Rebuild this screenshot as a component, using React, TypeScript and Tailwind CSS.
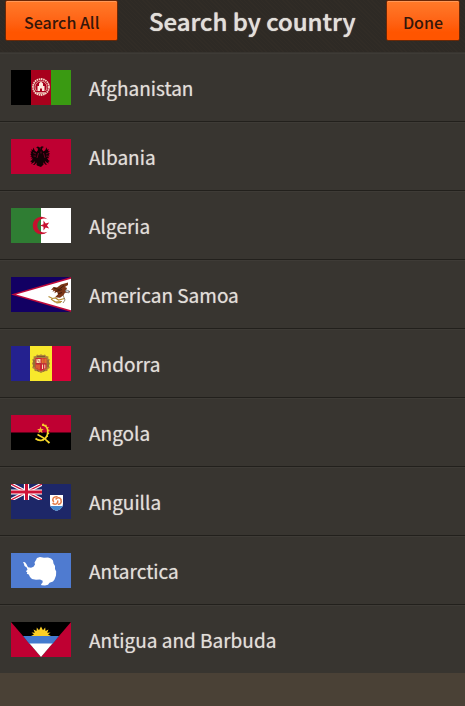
import type { ReactNode } from 'react';
import clsx from 'clsx';

type Country = {
    name: string;
    flag: ReactNode;
};

const Afghanistan = (
    <>
        <rect width="20" height="35" fill="#000" />
        <rect x="20" width="20" height="35" fill="#a8001c" />
        <rect x="40" width="20" height="35" fill="#3a9a12" />
        <g fill="none" stroke="#f3d9c8">
            <circle cx="30" cy="17" r="8" strokeWidth="1.8" strokeDasharray="1.6 .6" />
            <path d="M25.500 21a6 6 0 1 1 9 0" strokeWidth=".7" />
            <path d="M25.500 23h9" strokeWidth="1.4" />
        </g>
        <path d="M26.500 21v-5H28v-2.500l2-2 2 2V16h1.500v5H31v-2.500h-2V21z" fill="#fbe9dc" />
    </>
);

const Albania = (
    <>
        <rect width="60" height="35" fill="#bf0032" />
        <path
            d="M30 11 28.800 8.500 27 7.500l-2 .8 1.500.8.500 1.800-1.500 2-1.800-1.400-1.200-3-.7 2.500-1.600-.8.8 2.300-1.700-.1 1.200 2-1.500.6 1.500 1.300-1.300 1.200 2 .4-1.500 1.700 2.200-.2-1.400 2.200-1.300.6 1.600 1-.6 1.700 2.200-1.200 1.800-1.600-1 2.600-1.500.8 1.700.6 1-1 1.300-1.600-.2 2.600 1 .6L30 28l1.500-1.600 1-.6-.2-2.600 1.300 1.600 1 1 1.700-.6-1.500-.8-1-2.600 1.800 1.600 2.200 1.200-.6-1.700 1.600-1-1.300-.6-1.400-2.200 2.200.2-1.500-1.700 2-.4-1.300-1.200 1.500-1.300-1.500-.6 1.200-2-1.700.1.800-2.300-1.600.8-.7-2.500-1.200 3-1.800 1.400-1.500-2 .5-1.800 1.500-.8-2-.8-1.800 1z"
            fill="#120205"
        />
        <path
            d="M27.500 14l-1.500 5M32.500 14l1.500 5M22 13.500l3 1.500M38 13.500l-3 1.500M22.500 17l2.500.2M37.500 17l-2.500.2M30 12.500v2"
            stroke="#94002a"
            strokeWidth=".7"
        />
    </>
);

const Algeria = (
    <>
        <rect width="30" height="35" fill="#2f7d33" />
        <rect x="30" width="30" height="35" fill="#fff" />
        <path d="M36.500 11.300a8.700 8.700 0 1 0 0 12.400 7 7 0 1 1 0-12.400z" fill="#c8102e" />
        <path d="m29 17.500 3.500-1.200v-3.700l2.200 3 3.500-1.100-2.200 3 2.200 3-3.500-1.100-2.200 3v-3.700z" fill="#c8102e" />
    </>
);

const AmericanSamoa = (
    <>
        <rect width="60" height="35" fill="#120063" />
        <path d="M0 17.500 60 0v35z" fill="#bf0a3a" />
        <path d="M5 17.500 60 1.800v31.400z" fill="#fff" />
        <path
            d="M57 5.500 50 7.500l-4 3-3.500-.5-2.500 3 2.500-.2-1 2 2.500-1-.5 2.500 2.500-1.500 1 2.500-3 3 5 .5 3.500-2.500 1.500-2.500 4 .3 1-2-4-.6 1-2.500-2-1 3-2z"
            fill="#7a3516"
        />
        <path d="m43 11 5 1.500 5-4M45 14.500l6-2M47 17l4-1.500" fill="none" stroke="#35160a" strokeWidth=".8" />
        <path d="m54.500 13 3 .5.500 2.500-3-.8z" fill="#d7dbe0" stroke="#68727b" strokeWidth=".5" />
        <path
            d="m37.500 19.500 4 2 3-.5 3 2 6-1.500M40 22l4 3 7-.5M43 24l3 2 4-.5"
            fill="none"
            stroke="#b28a30"
            strokeWidth="1.200"
        />
        <path d="m52 18 2 5-2 3" fill="none" stroke="#6d5531" strokeWidth=".7" />
    </>
);

const Andorra = (
    <>
        <rect width="19" height="35" fill="#24218f" />
        <rect x="19" width="22" height="35" fill="#f8e82c" />
        <rect x="41" width="19" height="35" fill="#d80037" />
        <path
            d="m26 8.500 2 .7 2-.9 2 .9 2-.7 1 1.500 2.500.5-.3 2 1.600 1-.8 2 1 2-1 2 .8 2.500-2 1-.5 2-3 .2L30 27l-3.300-1.800-3-.2-.5-2-2-1 .8-2.500-1-2 1-2-.8-2 1.600-1-.3-2 2.500-.5z"
            fill="#ad803b"
        />
        <path d="M24.500 12h11v10.500L30 25l-5.500-2.500z" fill="#cb2335" />
        <path d="M25.500 13h4v4h-4zM31 18.500h1V23h-1zM33.300 18.500h1v4h-1z" fill="#f4dfae" />
        <path d="M31.200 12.500v5M33 12.500v5M34.800 12.500v5M26 18.500v4M28 18.500v5" stroke="#efb32d" strokeWidth=".8" />
        <path d="m26.500 13.500 2 3M24.500 17.700h11" stroke="#a4323b" strokeWidth=".6" />
        <path d="M23 14v7M37 14v7M26 10.500h8M26 24.500l2 .8M34 24.500l-2 .8" stroke="#71562f" strokeWidth=".8" />
    </>
);

const Angola = (
    <>
        <rect width="60" height="18" fill="#bf0032" />
        <rect y="17.500" width="60" height="17.500" fill="#000" />
        <g fill="none" stroke="#f6d72b">
            <path d="M31 9.800c4 .4 6 3.500 5.800 7.200-.2 4-2.800 7-6 8.200-2.300.6-4.500-.2-6.300-1.700" strokeWidth="1.700" />
            <path d="M31.500 9.200c4.500.3 6.800 4 6.300 8-.5 4-3 7.200-6.500 8.500" strokeWidth="1.200" strokeDasharray="1.300 1.700" />
            <path d="M26.500 19.500c3.500 1.500 8 4.500 12 8.500" strokeWidth="1.800" />
        </g>
        <path d="m29.500 11.500.9 2.500 2.400.1-1.900 1.600.7 2.500-2.100-1.400-2.200 1.400.8-2.500-2-1.600 2.500-.1z" fill="#f6b72b" />
    </>
);

const Anguilla = (
    <>
        <rect width="60" height="35" fill="#1d2768" />
        <svg width="31" height="16" viewBox="0 0 31 16">
            <path d="m0 0 31 16M31 0 0 16" stroke="#fff" strokeWidth="3.400" />
            <path d="m0 0 31 16M31 0 0 16" stroke="#ce1236" strokeWidth="1.200" />
            <path d="M15.500 0v16M0 8h31" stroke="#fff" strokeWidth="5.200" />
            <path d="M15.500 0v16M0 8h31" stroke="#ce1236" strokeWidth="3" />
        </svg>
        <path d="M39 11h13v9c0 3.500-3 5.500-6.500 7-3.500-1.500-6.500-3.500-6.500-7z" fill="#fff" />
        <path d="M39.200 22h12.600c-.8 2.300-3.300 3.800-6.300 5-3-1.200-5.500-2.700-6.300-5z" fill="#4687ce" />
        <g fill="none" stroke="#e37b45" strokeWidth="1.500" strokeLinecap="round">
            <path d="M46 12.700c-3.300-.5-5.300 2.300-3.500 5" />
            <path d="M50 15.500c-.7-2-3.500-2.600-5-.5" />
            <path d="M42 19.500c2.500 1.500 5 .2 4.800-2.500" />
            <path d="M47.500 20.300c2.300-.4 3.200-2.200 2.500-4" />
        </g>
    </>
);

const Antarctica = (
    <>
        <rect width="60" height="35" fill="#4f7bd0" />
        <path
            d="m12 9 2 .2 1.500 2 1.500 3 3 .5 2.500-1 1.500-2.200-.5-2L25 7l1-2 3-1 4 .8 4-.3 3 1 2 2 .5 3L44 13v3l1.200 2.500-.2 4-1.500 4-1.500 2-3.500 1.200-1.500 2-3 .8-3.500-.2-.5-1 1.500-1.500.2-2L29 26.500l-4 .3-4-.8-2-2-1.200-2.500-2-.7.500-1.500-1.500-1 1.700-1.600-.8-2.200-2.200-1.500-.5-2z"
            fill="#fff"
        />
    </>
);

const AntiguaAndBarbuda = (
    <>
        <rect width="60" height="35" fill="#bf0032" />
        <path d="M0 0h60L30 35z" fill="#000" />
        <path
            d="m20 14 3-1.500-2.500-2 3.300.2L22.500 7.500l3 1.400.3-3.300 2.200 2.600L30 4.500l2 3.700 2.200-2.600.3 3.300 3-1.400-1.300 3.200 3.300-.2-2.500 2L40 14z"
            fill="#fccf24"
        />
        <path d="M12 14h36l-6.500 8h-23z" fill="#437ace" />
        <path d="M18.500 21.500h23L30 35z" fill="#fff" />
    </>
);

const countries: Country[] = [
    { name: 'Afghanistan', flag: Afghanistan },
    { name: 'Albania', flag: Albania },
    { name: 'Algeria', flag: Algeria },
    { name: 'American Samoa', flag: AmericanSamoa },
    { name: 'Andorra', flag: Andorra },
    { name: 'Angola', flag: Angola },
    { name: 'Anguilla', flag: Anguilla },
    { name: 'Antarctica', flag: Antarctica },
    { name: 'Antigua and Barbuda', flag: AntiguaAndBarbuda },
];

function HeaderButton({ className, children }: { className?: string; children: ReactNode }) {
    return (
        <button
            type="button"
            className={clsx(
                'h-[41px] shrink-0 rounded-[2px] border border-[#6b2806] bg-linear-to-b from-[#ff7a29] to-[#ff5500] to-80% pt-[2px] text-[16px] font-medium text-[#35160a] shadow-[inset_0_1px_0_#ff9857] hover:brightness-110',
                className
            )}
        >
            {children}
        </button>
    );
}

export default function App() {
    return (
        <div className="min-h-screen bg-[#4a4136] font-['Noto_Sans_CJK_SC',sans-serif] text-[#e2dfda]">
            {/* Header */}
            <header className="flex h-[52px] items-start justify-between bg-[#2e2a25] bg-[repeating-linear-gradient(45deg,transparent_0_2px,#312c26_2px_3px)] px-[5px]">
                <HeaderButton className="px-[18px]">Search All</HeaderButton>
                <h1 className="text-[24px] leading-[42px] font-medium whitespace-nowrap [text-shadow:0_0_1px_currentColor]">
                    Search by country
                </h1>
                <HeaderButton className="px-4">Done</HeaderButton>
            </header>

            {/* Country list */}
            <ul className="bg-[#383530]">
                {countries.map((country) => (
                    <li
                        key={country.name}
                        className="flex items-center gap-[18px] border-t border-[#22201c] px-[11px] pt-[17px] pb-4 shadow-[inset_0_1px_0_#3e3b36] first:border-[#383530]"
                    >
                        <svg className="h-[35px] w-[60px] shrink-0" viewBox="0 0 60 35" aria-hidden="true">
                            {country.flag}
                        </svg>
                        <span className="text-[19px] leading-[34px] font-normal [text-shadow:0_0_1px_#e2dfda99]">
                            {country.name}
                        </span>
                    </li>
                ))}
            </ul>
        </div>
    );
}
